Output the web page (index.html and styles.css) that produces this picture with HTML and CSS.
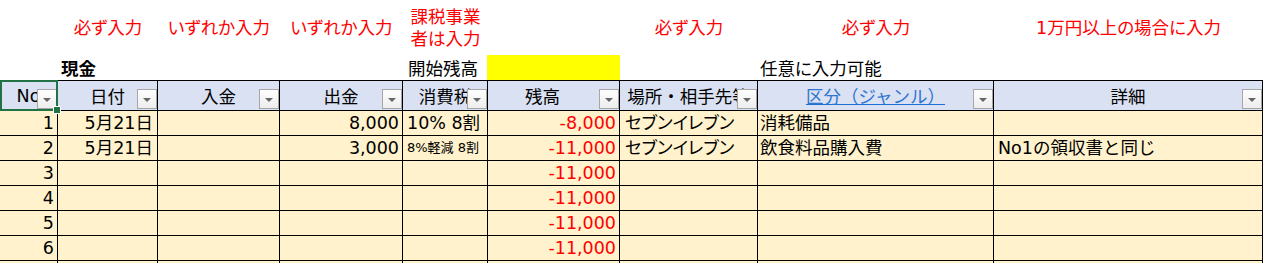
FILE: index.html
```html
<!DOCTYPE html>
<html lang="ja">
<head>
<meta charset="utf-8">
<title>現金出納帳</title>
<link rel="stylesheet" href="styles.css">
</head>
<body>
<div class="sheet">
  <div class="row notes">
    <div class="c"></div>
    <div class="c note">必ず入力</div>
    <div class="c note">いずれか入力</div>
    <div class="c note">いずれか入力</div>
    <div class="c note">課税事業者は入力</div>
    <div class="c"></div>
    <div class="c note">必ず入力</div>
    <div class="c note">必ず入力</div>
    <div class="c note">1万円以上の場合に入力</div>
  </div>
  <div class="row meta">
    <div class="c"></div>
    <div class="c title">現金</div>
    <div class="c"></div>
    <div class="c"></div>
    <div class="c label">開始残高</div>
    <div class="c yellow"></div>
    <div class="c"></div>
    <div class="c hint">任意に入力可能</div>
    <div class="c"></div>
  </div>
  <div class="row head">
    <div class="c first">No<span class="dd"></span><span class="sel"><span class="handle"></span></span></div>
    <div class="c">日付<span class="dd"></span></div>
    <div class="c">入金<span class="dd"></span></div>
    <div class="c">出金<span class="dd"></span></div>
    <div class="c">消費税<span class="dd"></span></div>
    <div class="c shift">残高<span class="dd"></span></div>
    <div class="c">場所・相手先等<span class="dd"></span></div>
    <div class="c"><span class="link">区分（ジャンル）</span><span class="dd"></span></div>
    <div class="c">詳細<span class="dd"></span></div>
  </div>
  <div class="row data">
    <div class="c r">1</div>
    <div class="c r date">5月21日</div>
    <div class="c r"></div>
    <div class="c r">8,000</div>
    <div class="c">10% 8割</div>
    <div class="c r neg">-8,000</div>
    <div class="c kana">セブンイレブン</div>
    <div class="c cat">消耗備品</div>
    <div class="c"></div>
  </div>
  <div class="row data">
    <div class="c r">2</div>
    <div class="c r date">5月21日</div>
    <div class="c r"></div>
    <div class="c r">3,000</div>
    <div class="c small">8%軽減 8割</div>
    <div class="c r neg">-11,000</div>
    <div class="c kana">セブンイレブン</div>
    <div class="c cat">飲食料品購入費</div>
    <div class="c">No1の領収書と同じ</div>
  </div>
  <div class="row data">
    <div class="c r">3</div>
    <div class="c r"></div>
    <div class="c r"></div>
    <div class="c r"></div>
    <div class="c"></div>
    <div class="c r neg">-11,000</div>
    <div class="c"></div>
    <div class="c"></div>
    <div class="c"></div>
  </div>
  <div class="row data">
    <div class="c r">4</div>
    <div class="c r"></div>
    <div class="c r"></div>
    <div class="c r"></div>
    <div class="c"></div>
    <div class="c r neg">-11,000</div>
    <div class="c"></div>
    <div class="c"></div>
    <div class="c"></div>
  </div>
  <div class="row data">
    <div class="c r">5</div>
    <div class="c r"></div>
    <div class="c r"></div>
    <div class="c r"></div>
    <div class="c"></div>
    <div class="c r neg">-11,000</div>
    <div class="c"></div>
    <div class="c"></div>
    <div class="c"></div>
  </div>
  <div class="row data">
    <div class="c r">6</div>
    <div class="c r"></div>
    <div class="c r"></div>
    <div class="c r"></div>
    <div class="c"></div>
    <div class="c r neg">-11,000</div>
    <div class="c"></div>
    <div class="c"></div>
    <div class="c"></div>
  </div>
  <div class="row data">
    <div class="c"></div>
    <div class="c"></div>
    <div class="c"></div>
    <div class="c"></div>
    <div class="c"></div>
    <div class="c"></div>
    <div class="c"></div>
    <div class="c"></div>
    <div class="c"></div>
  </div>
</div>
</body>
</html>
```
FILE: styles.css
```css
* { box-sizing: border-box; }
html, body {
  margin: 0;
  padding: 0;
  overflow: hidden;
  background: #fff;
}
body {
  font-family: "DejaVu Sans", "Noto Sans CJK JP", sans-serif;
  font-size: 17.5px;
  color: #000;
}
.row {
  display: grid;
  grid-template-columns: 58px 100px 122px 123px 85px 132px 138px 236px 269px;
}

/* notes row */
.notes { height: 55px; }
.note {
  color: #f00;
  display: flex;
  align-items: center;
  justify-content: center;
  text-align: center;
  line-height: 22px;
  padding: 0 4px;
  font-feature-settings: "palt";
}

/* meta row */
.meta { height: 25px; }
.meta .c {
  display: flex;
  align-items: center;
  white-space: nowrap;
}
.title { font-weight: bold; padding-left: 3px; }
.label { padding-left: 5px; }
.yellow { background: #ffff00; margin-left: -1px; }
.hint { padding-left: 2px; font-feature-settings: "palt"; }

/* header row */
.head .c {
  position: relative;
  height: 31px;
  background: #d9e1f2;
  border-top: 1px solid #000;
  border-bottom: 1px solid #000;
  border-right: 1px solid #000;
  display: flex;
  align-items: center;
  justify-content: center;
  white-space: nowrap;
}
.head .shift { padding-right: 22px; }
.link {
  color: #2e75d0;
  text-decoration: underline;
  text-decoration-color: #1f6fd6;
}
.dd {
  position: absolute;
  right: 0;
  bottom: 1px;
  width: 20px;
  height: 20px;
  border: 1px solid #a6a6a6;
  background: linear-gradient(#fefefe, #ededed);
  z-index: 1;
}
.dd::after {
  content: "";
  position: absolute;
  left: 50%;
  top: 8px;
  margin-left: -4px;
  border-left: 4px solid transparent;
  border-right: 4px solid transparent;
  border-top: 4px solid #666;
}
.sel {
  position: absolute;
  top: -1px;
  left: 0;
  right: -1px;
  bottom: -1px;
  border: 2px solid #217346;
  z-index: 2;
}
.handle {
  position: absolute;
  right: -4px;
  bottom: -4px;
  width: 6px;
  height: 6px;
  background: #217346;
  outline: 1px solid #fff;
}

/* data rows */
.data .c {
  height: 25px;
  background: #fff2cc;
  border-right: 1px solid #000;
  border-bottom: 1px solid #000;
  line-height: 24px;
  white-space: nowrap;
  overflow: hidden;
  padding: 0 3px 0 4px;
}
.data .r { text-align: right; padding: 0 3px 0 0; }
.data .date { padding-right: 4px; }
.data .neg { color: #f00; }
.data .kana { font-feature-settings: "palt"; padding-left: 5px; }
.data .cat { padding-left: 2px; }
.data .small { font-size: 13px; }
```
